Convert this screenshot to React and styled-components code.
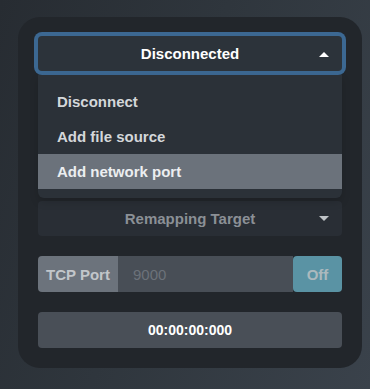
import React from "react";
import styled, { createGlobalStyle } from "styled-components";

const Global = createGlobalStyle`
  html, body { margin: 0; padding: 0; }
  body {
    width: 370px;
    height: 389px;
    overflow: hidden;
    background: linear-gradient(110deg, #272c32 0%, #2f363d 45%, #3a424b 100%);
    font-family: "Liberation Sans", Arial, sans-serif;
  }
`;

const Page = styled.div`
  padding: 17px 8px 20px 18px;
`;

const Panel = styled.div`
  width: 344px;
  box-sizing: border-box;
  background: #22262b;
  border-radius: 22px;
  padding: 19px 20px 20px 20px;
  display: flex;
  flex-direction: column;
  gap: 20px;
`;

const SelectWrap = styled.div`
  position: relative;
`;

const SelectButton = styled.div`
  position: relative;
  height: ${(p) => p.$h || 35}px;
  box-sizing: border-box;
  display: flex;
  align-items: center;
  justify-content: center;
  background: ${(p) => (p.$open ? "#2c333a" : "#292e35")};
  color: ${(p) => (p.$open ? "#ffffff" : "#8b9096")};
  border-radius: 4px;
  font-size: 15px;
  font-weight: 700;
  box-shadow: ${(p) => (p.$open ? "0 0 0 4px #3c6892" : "none")};
`;

const Caret = styled.span`
  position: absolute;
  right: 13px;
  top: 50%;
  margin-top: -3px;
  width: 0;
  height: 0;
  border-left: 5px solid transparent;
  border-right: 5px solid transparent;
  ${(p) =>
    p.$up
      ? "border-bottom: 5px solid #ffffff; margin-top: -2px;"
      : "border-top: 5px solid #bfc3c7; margin-top: -3px;"}
`;

const Menu = styled.div`
  position: absolute;
  top: calc(100% + 4px);
  left: 0;
  right: 0;
  z-index: 10;
  background: #2b3138;
  border-radius: 0 0 6px 6px;
  padding: 9px 0 9px 0;
  box-shadow: 0 4px 8px rgba(0, 0, 0, 0.15);
`;

const MenuItem = styled.div`
  height: 35px;
  display: flex;
  align-items: center;
  padding: 0 19px;
  font-size: 15px;
  font-weight: 700;
  color: ${(p) => (p.$active ? "#eceef0" : "#d4d7da")};
  background: ${(p) => (p.$active ? "#6b727b" : "transparent")};
`;

const HiddenRow = styled.div`
  height: 35px;
  background: #292e35;
  border-radius: 4px;
`;

const InputGroup = styled.div`
  display: flex;
  height: 36px;
`;

const Addon = styled.div`
  width: 80px;
  display: flex;
  align-items: center;
  justify-content: center;
  background: #6c737c;
  color: #c2c6ca;
  font-size: 15px;
  font-weight: 700;
  border-radius: 4px 0 0 4px;
`;

const PortInput = styled.div`
  flex: 1;
  display: flex;
  align-items: center;
  padding-left: 15px;
  background: #484e56;
  color: #6c727a;
  font-size: 15px;
`;

const ToggleButton = styled.div`
  width: 49px;
  display: flex;
  align-items: center;
  justify-content: center;
  background: #5a93a4;
  color: #abb9be;
  font-size: 15px;
  font-weight: 700;
  border-radius: 4px;
`;

const Timer = styled.div`
  height: 36px;
  display: flex;
  align-items: center;
  justify-content: center;
  background: #494f57;
  color: #ffffff;
  font-size: 14px;
  font-weight: 700;
  border-radius: 4px;
`;

export default function App() {
  return (
    <>
      <Global />
      <Page>
        <Panel>
          <SelectWrap>
            <SelectButton $open>
              Disconnected
              <Caret $up />
            </SelectButton>
            <Menu>
              <MenuItem>Disconnect</MenuItem>
              <MenuItem>Add file source</MenuItem>
              <MenuItem $active>Add network port</MenuItem>
            </Menu>
          </SelectWrap>
          <HiddenRow />
          <HiddenRow />
          <SelectButton $h={35}>
            Remapping Target
            <Caret />
          </SelectButton>
          <InputGroup>
            <Addon>TCP Port</Addon>
            <PortInput>9000</PortInput>
            <ToggleButton>Off</ToggleButton>
          </InputGroup>
          <Timer>00:00:00:000</Timer>
        </Panel>
      </Page>
    </>
  );
}
